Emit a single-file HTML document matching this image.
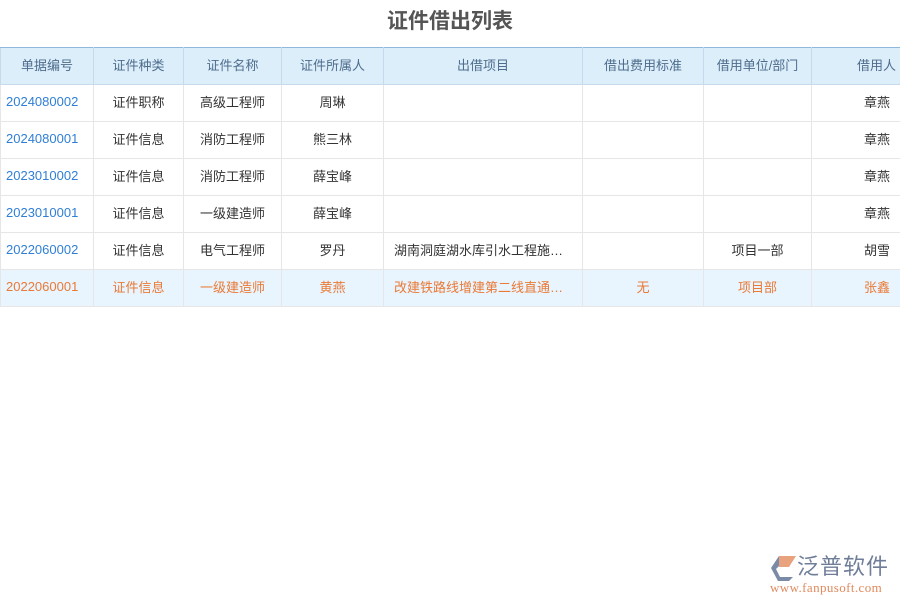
<!DOCTYPE html>
<html><head><meta charset="utf-8"><style>
body{margin:0;width:900px;height:600px;background:#fff;font-family:"Liberation Sans","Noto Sans CJK SC",sans-serif;position:relative;overflow:hidden}
h1{position:absolute;top:8px;left:0;width:900px;text-align:center;margin:0;font-size:21px;font-weight:bold;color:#555;line-height:28px}
table{position:absolute;top:47px;left:0;border-collapse:collapse;table-layout:fixed;width:905px;font-size:13px}
th{background:#ddeefb;color:#4d6d8c;font-weight:normal;height:32px;padding:0 0 4px 0;border:1px solid #c7d9ea;border-top:1px solid #8fb8dc}
td{height:32px;padding:0 0 4px 0;border:1px solid #e6e6e6;text-align:center;color:#333;white-space:nowrap;overflow:hidden}
td:first-child{color:#2f7fd6;text-align:left;padding-left:5px}
td.l{text-align:left;padding-left:10px}
td.r{text-align:right;padding-right:15px}
th.r{text-align:right;padding-right:9px}
tr.sel td{background:#e8f4fe;color:#ea7a36}
tr.sel td:first-child{color:#ea7a36}
.logo{position:absolute;left:770px;top:553px}
</style></head><body>
<h1>证件借出列表</h1>
<table>
<colgroup><col style="width:93px"><col style="width:90px"><col style="width:98px"><col style="width:102px"><col style="width:199px"><col style="width:121px"><col style="width:108px"><col style="width:94px"></colgroup>
<tr><th>单据编号</th><th>证件种类</th><th>证件名称</th><th>证件所属人</th><th>出借项目</th><th>借出费用标准</th><th>借用单位/部门</th><th class="r">借用人</th></tr>
<tr><td>2024080002</td><td>证件职称</td><td>高级工程师</td><td>周琳</td><td class="l"></td><td></td><td></td><td class="r">章燕</td></tr>
<tr><td>2024080001</td><td>证件信息</td><td>消防工程师</td><td>熊三林</td><td class="l"></td><td></td><td></td><td class="r">章燕</td></tr>
<tr><td>2023010002</td><td>证件信息</td><td>消防工程师</td><td>薛宝峰</td><td class="l"></td><td></td><td></td><td class="r">章燕</td></tr>
<tr><td>2023010001</td><td>证件信息</td><td>一级建造师</td><td>薛宝峰</td><td class="l"></td><td></td><td></td><td class="r">章燕</td></tr>
<tr><td>2022060002</td><td>证件信息</td><td>电气工程师</td><td>罗丹</td><td class="l">湖南洞庭湖水库引水工程施…</td><td></td><td>项目一部</td><td class="r">胡雪</td></tr>
<tr class="sel"><td>2022060001</td><td>证件信息</td><td>一级建造师</td><td>黄燕</td><td class="l">改建铁路线增建第二线直通…</td><td>无</td><td>项目部</td><td class="r">张鑫</td></tr>
</table>
<div class="logo">
<svg width="28" height="28" style="position:absolute;left:0;top:1px"><path d="M9 2h17l-7 11H9z" fill="#e9a27e"/><path d="M1 14L9 2v10l-3 3 4 8h13l-4 4H8z" fill="#7b8aa6"/></svg>
<div style="position:absolute;left:27px;top:0;font-size:22px;color:#6f7d98;white-space:nowrap;line-height:27px;letter-spacing:1px">泛普软件</div>
<div style="position:absolute;left:0;top:27px;font-family:'Liberation Serif',serif;font-size:13px;color:#e08a5e;white-space:nowrap;letter-spacing:0.4px">www.fanpusoft.com</div>
</div>
</body></html>
